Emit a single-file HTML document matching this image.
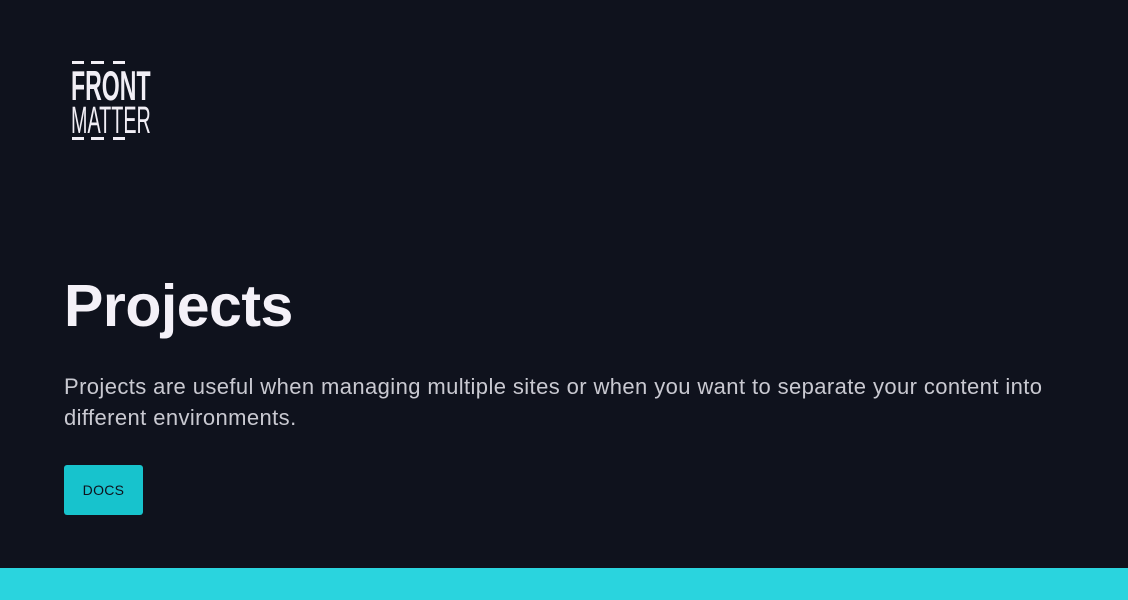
<!DOCTYPE html>
<html><head><style>
html,body{margin:0;padding:0;width:1128px;height:600px;overflow:hidden;background:#0f121d;font-family:"Liberation Sans",sans-serif;position:relative}
.d{position:absolute;height:3px;background:#f1eef5}
.logo{position:absolute;left:71px;color:#f1eef5;transform-origin:left top;white-space:nowrap;line-height:1}
h1{position:absolute;left:64px;top:272px;margin:0;font-size:59px;font-weight:bold;color:#f4f1f8;letter-spacing:-0.5px}
p{position:absolute;left:64px;top:371px;margin:0;width:1000px;font-size:22px;letter-spacing:0.4px;line-height:31px;color:#c9c9d1}
.btn{position:absolute;left:64px;top:465px;width:79px;height:50px;background:#17c3cd;border-radius:3px;color:#0f121d;font-size:14px;line-height:50px;text-align:center;letter-spacing:0.3px}
.bar{position:absolute;left:0;top:568px;width:1128px;height:32px;background:#2ad4de}
</style></head><body>
<div class="d" style="left:72px;top:61px;width:12px"></div>
<div class="d" style="left:91px;top:61px;width:13px"></div>
<div class="d" style="left:113px;top:61px;width:12px"></div>
<div class="logo" style="top:65px;font-size:42px;font-weight:bold;transform:scaleX(0.55)">FRONT</div>
<div class="logo" style="top:102px;font-size:38px;transform:scaleX(0.52)">MATTER</div>
<div class="d" style="left:72px;top:137px;width:12px"></div>
<div class="d" style="left:91px;top:137px;width:13px"></div>
<div class="d" style="left:113px;top:137px;width:12px"></div>
<h1>Projects</h1>
<p>Projects are useful when managing multiple sites or when you want to separate your content into different environments.</p>
<div class="btn">DOCS</div>
<div class="bar"></div>
</body></html>
